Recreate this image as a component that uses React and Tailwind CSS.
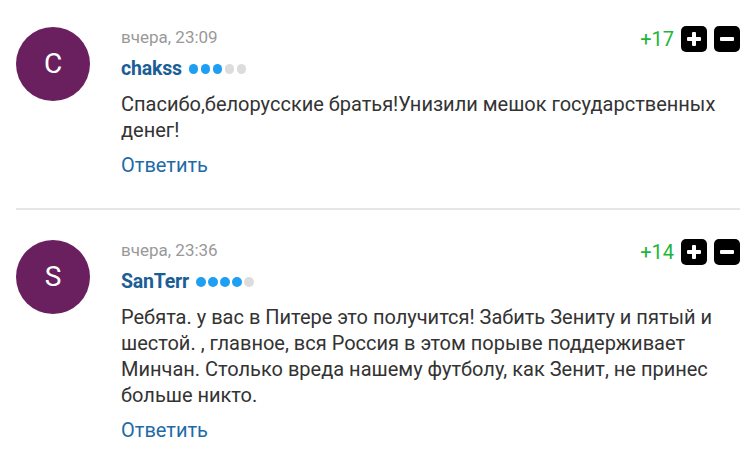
import React from "react";

function Dots({ filled }) {
  return (
    <span className="flex items-center gap-[2.5px] ml-[7px]">
      {[0, 1, 2, 3, 4].map((i) => (
        <span
          key={i}
          className={
            "block w-[9.5px] h-[9.5px] rounded-full " +
            (i < filled ? "bg-[#1e9ff2]" : "bg-[#dcdcdc]")
          }
        />
      ))}
    </span>
  );
}

function VoteBtn({ minus }) {
  return (
    <span className="flex w-[26px] h-[26px] rounded-[5px] bg-black items-center justify-center">
      <svg width="16" height="16" viewBox="0 0 16 16">
        <rect x="1" y="6" width="14" height="4" rx="1" fill="#fff" />
        {!minus && <rect x="6" y="1" width="4" height="14" rx="1" fill="#fff" />}
      </svg>
    </span>
  );
}

function Comment({ letter, time, name, dots, score, text, first }) {
  return (
    <div className={"flex " + (first ? "pt-[27px] pb-[31px]" : "pt-[30px] pb-[10px]")}>
      <div className="w-[74px] h-[74px] shrink-0 rounded-full bg-[#6a1f5f] flex items-center justify-center text-white text-[28px] leading-none">
        {letter}
      </div>
      <div className="ml-[31px] flex-1">
        <div className="flex justify-between items-start h-[20px]">
          <div className="h-[20px] leading-[20px] text-[17px] text-[#999999]">{time}</div>
          <div className="flex items-center -mt-[1px]">
            <span className="text-[20px] leading-[26px] text-[#1db53b] mr-[7px]">{score}</span>
            <VoteBtn />
            <span className="w-[7px]" />
            <VoteBtn minus />
          </div>
        </div>
        <div className="flex items-center h-[22px] mt-[11px]">
          <span className="text-[19.5px] font-bold tracking-[-0.2px] text-[#1b5e96] leading-[22px]">{name}</span>
          <Dots filled={dots} />
        </div>
        <div className="mt-[11px] text-[20px] leading-[26px] text-[#333333]">{text}</div>
        <div className="mt-[10px] text-[20px] leading-[24px] text-[#1f6aa6]">Ответить</div>
      </div>
    </div>
  );
}

export default function App() {
  return (
    <div
      className="w-[753px] h-[451px] bg-white overflow-hidden pl-[16px] pr-[13px]"
      style={{ fontFamily: "Roboto, 'Noto Sans', sans-serif" }}
    >
      <Comment
        first
        letter="C"
        time="вчера, 23:09"
        name="chakss"
        dots={3}
        score="+17"
        text="Спасибо,белорусские братья!Унизили мешок государственных денег!"
      />
      <div className="h-[2px] bg-[#e6e6e6]" />
      <Comment
        letter="S"
        time="вчера, 23:36"
        name="SanTerr"
        dots={4}
        score="+14"
        text="Ребята. у вас в Питере это получится! Забить Зениту и пятый и шестой. , главное, вся Россия в этом порыве поддерживает Минчан. Столько вреда нашему футболу, как Зенит, не принес больше никто."
      />
    </div>
  );
}
